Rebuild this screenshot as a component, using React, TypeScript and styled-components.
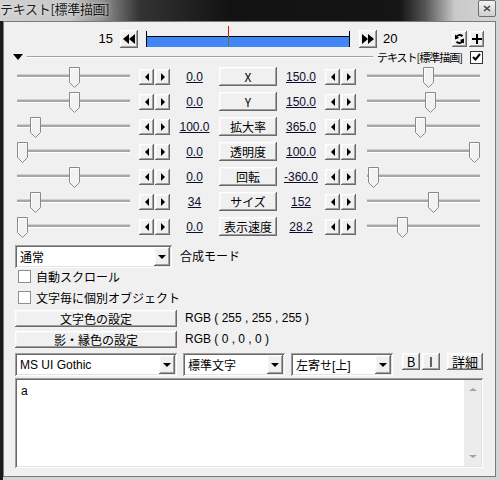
import React from "react";
import styled, { createGlobalStyle, css } from "styled-components";

const GlobalStyle = createGlobalStyle`
  html, body { margin: 0; padding: 0; }
  body {
    width: 500px; height: 480px; overflow: hidden;
    font-family: "Liberation Sans", "Noto Sans CJK JP", sans-serif;
    font-size: 12px; color: #000;
  }
`;

const raised = css`
  background: #f0f0f0;
  box-shadow: inset -1px -1px #696969, inset 1px 1px #ffffff, inset -2px -2px #a0a0a0, inset 2px 2px #f7f7f7;
`;

const sunken = css`
  box-shadow: inset 1px 1px #a0a0a0, inset -1px -1px #ffffff, inset 2px 2px #696969, inset -2px -2px #e3e3e3;
`;

const Window = styled.div`
  width: 500px; height: 480px;
  display: flex; flex-direction: column;
`;

const TitleBar = styled.div`
  height: 21px; flex: none;
  display: flex; align-items: flex-start; justify-content: space-between;
  padding-right: 4px;
  background: linear-gradient(to right, #d2d2d2 0px, #c6c6c6 70px, #8a8a8a 105px, #333 140px, #121212 230px, #151515 400px, #555 425px, #c9c9c9 455px, #d6d6d6 500px);
`;

const Title = styled.span`
  padding-top: 1px;
  font-family: "Noto Sans CJK JP", sans-serif;
  font-size: 13px; line-height: 16px;
  color: #1a1a1a;
  letter-spacing: -0.3px;
  text-shadow: 0 0 4px rgba(255,255,255,0.7);
`;

const CloseBtn = styled.div`
  width: 18px; height: 17px;
  box-sizing: border-box;
  border: 1px solid #6e6e6e;
  border-radius: 2px;
  background: linear-gradient(#f4f4f4, #cfcfcf);
  display: flex; align-items: center; justify-content: center;
`;

const Frame = styled.div`
  flex: 1;
  display: flex;
  padding: 0 4px 3px 3px;
  background: linear-gradient(to right, #1b1b1b 0 3px, #d4d4d4 3px);
`;

const Client = styled.div`
  flex: 1;
  background: #f0f0f0;
  border: 1px solid #7a7a7a;
  display: flex; flex-direction: column;
`;

const TimelineRow = styled.div`
  height: 19px; margin-top: 7px;
  display: flex; align-items: center;
  padding: 0 11px 0 89px;
`;

const FrameNum = styled.span<{ $align: "left" | "right" }>`
  width: 20px; font-size: 13px;
  text-align: ${(p) => p.$align};
`;

const NavBtn = styled.div`
  ${raised};
  width: 18px; height: 18px;
  display: flex; align-items: center; justify-content: center;
`;

const Bar = styled.div`
  position: relative;
  width: 204px; height: 16px; box-sizing: border-box;
  border-left: 1px solid #000; border-right: 1px solid #000;
  margin: 0 9px 0 8px;
`;

const BarFill = styled.div`
  margin-top: 5px; height: 10px;
  border-top: 1px solid #000;
  background: #4285f4;
`;

const Marker = styled.div<{ $at: number }>`
  position: absolute; left: ${(p) => p.$at}px; top: -5px;
  width: 1px; height: 20px;
  background: linear-gradient(#ff0000 0 10px, #5c7a24 10px);
`;

const Spacer = styled.div`
  flex: 1;
`;

const SmallIconBtn = styled.div`
  ${raised};
  width: 15px; height: 16px; margin-left: 2px;
  display: flex; align-items: center; justify-content: center;
`;

const ObjectRow = styled.div`
  height: 14px; margin-top: 2px;
  display: flex; align-items: center;
  padding: 0 12px 0 9px;
`;

const DownTri = styled.div`
  width: 0; height: 0;
  border-left: 5px solid transparent; border-right: 5px solid transparent;
  border-top: 6px solid #000;
`;

const Rule = styled.div`
  flex: 1; margin: 0 4px;
  height: 1px; background: #a0a0a0; border-bottom: 1px solid #fff;
`;

const ObjectName = styled.span`
  font-family: "Noto Sans CJK JP", sans-serif;
  font-size: 11px; letter-spacing: -1px;
  margin-right: 8px;
`;

const CheckBox = styled.div<{ $dark?: boolean }>`
  width: 13px; height: 13px; box-sizing: border-box;
  background: #fff;
  border: 1px solid ${(p) => (p.$dark ? "#333" : "#8e8f8f")};
  display: flex; align-items: center; justify-content: center;
  flex: none;
`;

const ParamRow = styled.div`
  height: 25px;
  display: flex; align-items: center;
  padding-left: 13px;
`;

const SliderBox = styled.div<{ $ml: number }>`
  position: relative;
  width: 113px; height: 25px; flex: none;
  margin-left: ${(p) => p.$ml}px;
`;

const Track = styled.div`
  margin-top: 10px; height: 2px;
  background: #a7a7a7;
  border-top: 1px solid #d0d0d0;
  border-bottom: 1px solid #fff;
`;

const ThumbWrap = styled.div<{ $pos: number }>`
  position: absolute; top: 3px; left: ${(p) => p.$pos}px;
  width: 11px; height: 21px;
`;

const ArrowPair = styled.div<{ $ml: number }>`
  display: flex; gap: 1px; margin-left: ${(p) => p.$ml}px;
`;

const ArrowBtn = styled.div`
  ${raised};
  width: 15px; height: 16px;
  display: flex; align-items: center; justify-content: center;
`;

const ArrowGlyph = styled.div<{ $dir: "l" | "r" }>`
  width: 0; height: 0;
  border-top: 4px solid transparent; border-bottom: 4px solid transparent;
  ${(p) => (p.$dir === "l" ? "border-right: 4px solid #000;" : "border-left: 4px solid #000;")}
`;

const Value = styled.span<{ $w: number }>`
  width: ${(p) => p.$w}px; text-align: center;
  text-decoration: underline;
  color: #0c0c30;
`;

const LabelBtn = styled.div`
  ${raised};
  width: 58px; height: 19px;
  display: flex; align-items: center; justify-content: center;
  font-family: "Noto Sans CJK JP", sans-serif;
`;

const BlendRow = styled.div`
  display: flex; align-items: flex-start;
  margin-top: 6px; padding-left: 11px; gap: 8px;
`;

const Select = styled.div<{ $w: number }>`
  ${sunken};
  background: #fff;
  width: ${(p) => p.$w}px; height: 23px; box-sizing: border-box;
  padding: 2px 2px 2px 5px;
  display: flex; align-items: center; justify-content: space-between;
  font-family: "Liberation Sans", "Noto Sans CJK JP", sans-serif;
`;

const DropBtn = styled.div`
  ${raised};
  width: 16px; height: 19px;
  display: flex; align-items: center; justify-content: center;
`;

const SmallDown = styled.div`
  width: 0; height: 0;
  border-left: 4px solid transparent; border-right: 4px solid transparent;
  border-top: 4px solid #000;
`;

const Caption = styled.span`
  padding-top: 2px;
  font-family: "Noto Sans CJK JP", sans-serif;
`;

const CheckGroup = styled.div`
  margin-top: -2px;
`;

const CheckRow = styled.div`
  height: 21px;
  display: flex; align-items: center; gap: 5px;
  padding-left: 14px;
  font-family: "Noto Sans CJK JP", sans-serif;
`;

const ColorRow = styled.div`
  height: 21px;
  display: flex; align-items: flex-start; gap: 8px;
  padding-left: 11px;
  &:first-of-type { margin-top: 2px; }
`;

const WideBtn = styled.div`
  ${raised};
  width: 162px; height: 17px;
  display: flex; align-items: center; justify-content: center;
  font-family: "Noto Sans CJK JP", sans-serif;
`;

const RgbText = styled.span`
  line-height: 17px;
`;

const FontRow = styled.div`
  display: flex; align-items: flex-start; gap: 6px;
  margin-top: 1px; padding-left: 11px;
`;

const StyleBtn = styled.div<{ $w: number; $ml: number }>`
  ${raised};
  width: ${(p) => p.$w}px; height: 17px; margin-left: ${(p) => p.$ml}px;
  display: flex; align-items: center; justify-content: center;
  font-family: "Noto Sans CJK JP", sans-serif;
  font-size: 13px;
`;

const TextArea = styled.div`
  ${sunken};
  background: #fff;
  width: 468px; height: 90px; box-sizing: border-box;
  margin: 2px 0 0 11px;
  padding: 2px;
  display: flex;
`;

const TextBody = styled.div`
  flex: 1; padding: 4px 4px;
  font-size: 12px;
`;

const ScrollBar = styled.div`
  width: 17px;
  background: #ececec;
  display: flex; flex-direction: column; align-items: center; justify-content: space-between;
  padding: 8px 0;
`;

const ScrollArrow = styled.div<{ $up: boolean }>`
  width: 0; height: 0;
  border-left: 4px solid transparent; border-right: 4px solid transparent;
  ${(p) => (p.$up ? "border-bottom: 3px solid #a3a3a3;" : "border-top: 3px solid #a3a3a3;")}
`;

const Thumb = () => (
  <svg width="11" height="21" viewBox="0 0 11 21">
    <polygon points="0.5,0.5 10.5,0.5 10.5,15.5 5.5,20.5 0.5,15.5" fill="#f2f2f2" stroke="#8a8a8a" />
    <polyline points="1.5,15 1.5,1.5 9.5,1.5" fill="none" stroke="#ffffff" />
  </svg>
);

const DoubleTri = ({ dir }: { dir: "l" | "r" }) => (
  <svg width="12" height="10" viewBox="0 0 12 10">
    {dir === "l" ? (
      <>
        <polygon points="0,5 6,0 6,10" fill="#000" />
        <polygon points="6,5 12,0 12,10" fill="#000" />
      </>
    ) : (
      <>
        <polygon points="0,0 6,5 0,10" fill="#000" />
        <polygon points="6,0 12,5 6,10" fill="#000" />
      </>
    )}
  </svg>
);

const rows = [
  { label: "X", left: "0.0", right: "150.0", lp: 52, rp: 56 },
  { label: "Y", left: "0.0", right: "150.0", lp: 52, rp: 58 },
  { label: "拡大率", left: "100.0", right: "365.0", lp: 13, rp: 48 },
  { label: "透明度", left: "0.0", right: "100.0", lp: 0, rp: 102 },
  { label: "回転", left: "0.0", right: "-360.0", lp: 52, rp: 1 },
  { label: "サイズ", left: "34", right: "152", lp: 13, rp: 61 },
  { label: "表示速度", left: "0.0", right: "28.2", lp: 0, rp: 30 },
];

const Slider = ({ pos, ml }: { pos: number; ml: number }) => (
  <SliderBox $ml={ml}>
    <Track />
    <ThumbWrap $pos={pos}>
      <Thumb />
    </ThumbWrap>
  </SliderBox>
);

const Arrows = ({ ml }: { ml: number }) => (
  <ArrowPair $ml={ml}>
    <ArrowBtn><ArrowGlyph $dir="l" /></ArrowBtn>
    <ArrowBtn><ArrowGlyph $dir="r" /></ArrowBtn>
  </ArrowPair>
);

const Combo = ({ w, text }: { w: number; text: string }) => (
  <Select $w={w}>
    <span>{text}</span>
    <DropBtn><SmallDown /></DropBtn>
  </Select>
);

export default function App() {
  return (
    <Window>
      <GlobalStyle />
      <TitleBar>
        <Title>テキスト[標準描画]</Title>
        <CloseBtn>
          <svg width="8" height="7" viewBox="0 0 8 7">
            <path d="M1 1 L7 6 M7 1 L1 6" stroke="#444" strokeWidth="1.6" />
          </svg>
        </CloseBtn>
      </TitleBar>
      <Frame>
        <Client>
          <TimelineRow>
            <FrameNum $align="right">15</FrameNum>
            <NavBtn style={{ marginLeft: 7 }}><DoubleTri dir="l" /></NavBtn>
            <Bar>
              <BarFill />
              <Marker $at={81} />
            </Bar>
            <NavBtn><DoubleTri dir="r" /></NavBtn>
            <FrameNum $align="left" style={{ marginLeft: 6 }}>20</FrameNum>
            <Spacer />
            <SmallIconBtn>
              <svg width="11" height="12" viewBox="0 0 11 12">
                <path d="M8.5 3.2 A4 4 0 0 0 2 4.5" fill="none" stroke="#000" strokeWidth="2" />
                <polygon points="1,1.5 1,6.5 5,5" fill="#000" />
                <path d="M2.5 8.8 A4 4 0 0 0 9 7.5" fill="none" stroke="#000" strokeWidth="2" />
                <polygon points="10,10.5 10,5.5 6,7" fill="#000" />
              </svg>
            </SmallIconBtn>
            <SmallIconBtn>
              <svg width="10" height="10" viewBox="0 0 10 10">
                <rect x="4" y="0" width="2" height="10" fill="#000" />
                <rect x="0" y="4" width="10" height="2" fill="#000" />
              </svg>
            </SmallIconBtn>
          </TimelineRow>

          <ObjectRow>
            <DownTri />
            <Rule />
            <ObjectName>テキスト[標準描画]</ObjectName>
            <CheckBox $dark>
              <svg width="9" height="8" viewBox="0 0 9 8">
                <path d="M1 4 L3.5 6.5 L8 1" fill="none" stroke="#000" strokeWidth="2" />
              </svg>
            </CheckBox>
          </ObjectRow>

          {rows.map((r) => (
            <ParamRow key={r.label}>
              <Slider pos={r.lp} ml={0} />
              <Arrows ml={9} />
              <Value $w={49}>{r.left}</Value>
              <LabelBtn>{r.label}</LabelBtn>
              <Value $w={48}>{r.right}</Value>
              <Arrows ml={0} />
              <Slider pos={r.rp} ml={11} />
            </ParamRow>
          ))}

          <BlendRow>
            <Combo w={157} text="通常" />
            <Caption>合成モード</Caption>
          </BlendRow>

          <CheckGroup>
            <CheckRow>
              <CheckBox />
              <span>自動スクロール</span>
            </CheckRow>
            <CheckRow>
              <CheckBox />
              <span>文字毎に個別オブジェクト</span>
            </CheckRow>
          </CheckGroup>

          <div>
            <ColorRow>
              <WideBtn>文字色の設定</WideBtn>
              <RgbText>RGB ( 255 , 255 , 255 )</RgbText>
            </ColorRow>
            <ColorRow>
              <WideBtn>影・縁色の設定</WideBtn>
              <RgbText>RGB ( 0 , 0 , 0 )</RgbText>
            </ColorRow>
          </div>

          <FontRow>
            <Combo w={162} text="MS UI Gothic" />
            <Combo w={102} text="標準文字" />
            <Combo w={102} text="左寄せ[上]" />
            <StyleBtn $w={18} $ml={3}>B</StyleBtn>
            <StyleBtn $w={18} $ml={-4}>I</StyleBtn>
            <StyleBtn $w={36} $ml={1}>詳細</StyleBtn>
          </FontRow>

          <TextArea>
            <TextBody>a</TextBody>
            <ScrollBar>
              <ScrollArrow $up />
              <ScrollArrow $up={false} />
            </ScrollBar>
          </TextArea>
        </Client>
      </Frame>
    </Window>
  );
}
